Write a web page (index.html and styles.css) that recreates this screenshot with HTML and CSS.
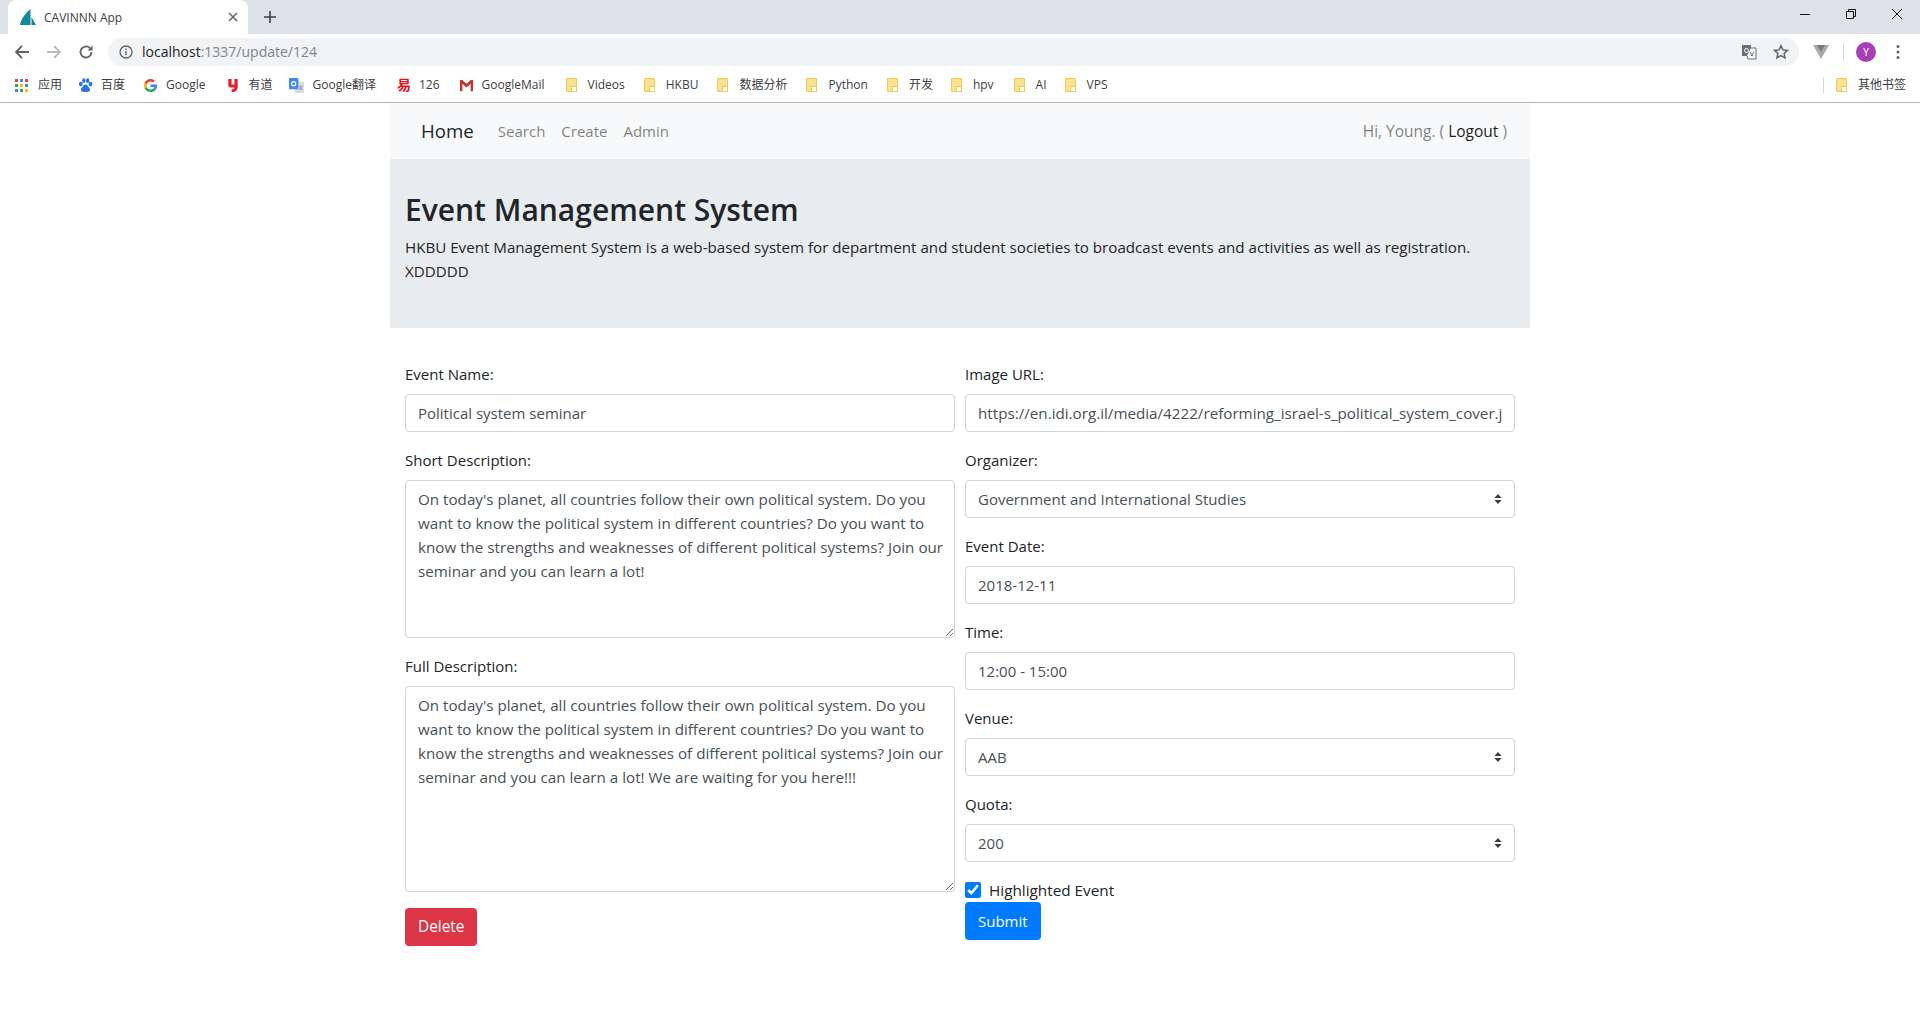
FILE: index.html
```html
<!DOCTYPE html>
<html lang="en">
<head>
    <meta charset="UTF-8">
    <title>CAVINNN App</title>
    <link rel="stylesheet" href="styles.css">
</head>
<body>

<!-- browser chrome -->
<div class="tabstrip">
    <div class="tab">
        <svg class="favicon" viewBox="0 0 16 16"><path d="M10.500 0C6 3.500 1 9.500 0 16h10.500z" fill="#14899b"/><path d="M11.500 8L16 16h-4.500z" fill="#14899b"/></svg>
        <span class="tab-title">CAVINNN App</span>
        <svg class="tab-close" viewBox="0 0 10 10"><path d="M1 1l8 8M9 1l-8 8" stroke="#5f6368" stroke-width="1.500"/></svg>
    </div>
    <svg class="tab-new" viewBox="0 0 12 12"><path d="M6 0v12M0 6h12" stroke="#3c4043" stroke-width="1.600"/></svg>
    <div class="window-btns">
        <svg viewBox="0 0 12 12"><path d="M1 6.500h10" stroke="#111" stroke-width="1"/></svg>
        <svg viewBox="0 0 12 12"><path d="M1.500 3.500h7v7h-7zM3.500 3.500v-2h7v7h-2" fill="none" stroke="#111" stroke-width="1"/></svg>
        <svg viewBox="0 0 12 12"><path d="M1 1l10 10M11 1L1 11" stroke="#111" stroke-width="1"/></svg>
    </div>
</div>

<div class="toolbar">
    <svg class="tool" viewBox="0 0 16 16"><path d="M15 8H2.500M8 2L2 8l6 6" fill="none" stroke="#5f6368" stroke-width="1.800"/></svg>
    <svg class="tool" viewBox="0 0 16 16"><path d="M1 8h12.500M8 2l6 6-6 6" fill="none" stroke="#b9bcc0" stroke-width="1.800"/></svg>
    <svg class="tool" viewBox="0 0 16 16"><path d="M13.500 8A5.500 5.500 0 1 1 11.800 4" fill="none" stroke="#5f6368" stroke-width="1.800"/><path d="M14.500 1.500v5h-5z" fill="#5f6368"/></svg>
    <div class="omnibox">
        <svg class="info" viewBox="0 0 14 14"><circle cx="7" cy="7" r="6" fill="none" stroke="#5f6368" stroke-width="1.300"/><path d="M7 6v4.200M7 3.500v1.400" stroke="#5f6368" stroke-width="1.400"/></svg>
        <span class="url">localhost<span class="url-rest">:1337/update/124</span></span>
        <svg class="translate" viewBox="0 0 16 16"><rect x="1" y="1" width="9" height="11" fill="#6d7073"/><path d="M10 4h5v11H7l-1-3" fill="#fff" stroke="#6d7073"/><circle cx="5.500" cy="6.500" r="2" fill="none" stroke="#fff"/><path d="M9 8l3 4M13 8l-3 4" stroke="#6d7073"/></svg>
        <svg class="star" viewBox="0 0 16 16"><path d="M8 1.800l1.900 4.100 4.500.5-3.300 3 .9 4.400L8 11.600l-4 2.200.9-4.400-3.300-3 4.500-.5z" fill="none" stroke="#5f6368" stroke-width="1.500"/></svg>
    </div>
    <svg class="vue-ext" viewBox="0 0 16 14"><path d="M0 0h16L8 14z" fill="#a6a8ab"/><path d="M4 0h8L8 7z" fill="#77797c"/></svg>
    <span class="tool-sep"></span>
    <span class="avatar">Y</span>
    <svg class="dots" viewBox="0 0 4 16"><circle cx="2" cy="2.500" r="1.500"/><circle cx="2" cy="8" r="1.500"/><circle cx="2" cy="13.500" r="1.500"/></svg>
</div>

<div class="bookmarks">
    <a class="bm bm-apps">
        <svg class="bm-icon" viewBox="0 0 13 13">
            <rect width="3" height="3" fill="#ea4335"/><rect x="5" width="3" height="3" fill="#4285f4"/><rect x="10" width="3" height="3" fill="#ea4335"/>
            <rect y="5" width="3" height="3" fill="#34a853"/><rect x="5" y="5" width="3" height="3" fill="#fbbc05"/><rect x="10" y="5" width="3" height="3" fill="#4285f4"/>
            <rect y="10" width="3" height="3" fill="#4285f4"/><rect x="5" y="10" width="3" height="3" fill="#34a853"/><rect x="10" y="10" width="3" height="3" fill="#fbbc05"/>
        </svg>应用</a>
    <a class="bm">
        <svg class="bm-icon" viewBox="0 0 16 16" fill="#2a76e8"><ellipse cx="3" cy="6.500" rx="2" ry="2.500"/><ellipse cx="6.200" cy="2.800" rx="1.800" ry="2.500"/><ellipse cx="10.300" cy="2.800" rx="1.800" ry="2.500"/><ellipse cx="13.300" cy="6.500" rx="2" ry="2.500"/><path d="M8 7c-2 0-2.500 2-4 3.500S3 15 6 15c1 0 1.300-.4 2-.4s1 .4 2 .4c3 0 3.500-3 2-4.500S10 7 8 7z"/></svg>百度</a>
    <a class="bm bm-google">
        <svg class="bm-icon" viewBox="0 0 16 16"><path d="M15 8.200c0-.5 0-1-.1-1.400H8v2.700h4c-.2.900-.7 1.700-1.500 2.200l2.300 1.800c1.400-1.300 2.200-3.100 2.200-5.300z" fill="#4285f4"/><path d="M8 15c1.900 0 3.500-.6 4.800-1.700l-2.300-1.800c-.7.400-1.500.7-2.500.7-1.900 0-3.500-1.300-4-3L1.600 11C2.800 13.400 5.200 15 8 15z" fill="#34a853"/><path d="M4 9.200c-.3-.8-.3-1.600 0-2.400L1.600 5c-.8 1.900-.8 4.100 0 6z" fill="#fbbc05"/><path d="M8 3.800c1 0 2 .4 2.700 1.100l2-2C11.500 1.700 9.800 1 8 1 5.200 1 2.800 2.600 1.600 5L4 6.800c.5-1.700 2.100-3 4-3z" fill="#ea4335"/></svg>Google</a>
    <a class="bm bm-youdao">
        <svg class="bm-icon" viewBox="0 0 12 16"><path d="M1 1h3.500v6h3V1H11v8.500c0 3-2 5.500-6.500 5.500v-3c2 0 3-.8 3-2H3C1.500 10 1 9 1 7.500z" fill="#e3202e"/></svg>有道</a>
    <a class="bm bm-translate">
        <svg class="bm-icon" viewBox="0 0 16 16"><rect x="6" y="4" width="10" height="12" fill="#d7dade"/><rect width="10" height="12" rx="1" fill="#4285f4"/><circle cx="5" cy="6" r="2.200" fill="none" stroke="#fff" stroke-width="1.200"/><path d="M11 8l3 5M14 8l-3 5" stroke="#8a8d91"/></svg>Google翻译</a>
    <a class="bm bm-wide"><span class="yi-icon">易</span>126</a>
    <a class="bm bm-gmail">
        <svg class="bm-icon" viewBox="0 0 16 14"><path d="M1 1h2.500L8 5l4.500-4H15v12h-2.600V5L8 9 3.600 5v8H1z" fill="#c5352b"/></svg>GoogleMail</a>
    <a class="bm bm-wide"><span class="folder"></span>Videos</a>
    <a class="bm bm-wide"><span class="folder"></span>HKBU</a>
    <a class="bm bm-wide"><span class="folder"></span>数据分析</a>
    <a class="bm bm-wide"><span class="folder"></span>Python</a>
    <a class="bm"><span class="folder"></span>开发</a>
    <a class="bm bm-hpv"><span class="folder"></span>hpv</a>
    <a class="bm"><span class="folder"></span>AI</a>
    <a class="bm"><span class="folder"></span>VPS</a>
    <span class="bm-sep"></span>
    <a class="bm bm-other"><span class="folder"></span>其他书签</a>
</div>

<!-- page -->
<div class="container">
    <nav class="navbar">
        <a class="brand">Home</a>
        <a class="nav-link">Search</a>
        <a class="nav-link">Create</a>
        <a class="nav-link">Admin</a>
        <span class="nav-user">Hi, Young. ( <a class="logout">Logout</a> )</span>
    </nav>

    <div class="jumbotron">
        <h1>Event Management System</h1>
        <p>HKBU Event Management System is a web-based system for department and student societies to broadcast events and activities as well as registration.<br>XDDDDD</p>
    </div>

    <form class="event-form">
        <div class="col">
            <div class="form-group">
                <label for="name">Event Name:</label>
                <input class="form-control" type="text" id="name" value="Political system seminar">
            </div>
            <div class="form-group">
                <label for="short">Short Description:</label>
                <textarea class="form-control short" id="short">On today's planet, all countries follow their own political system. Do you want to know the political system in different countries? Do you want to know the strengths and weaknesses of different political systems? Join our seminar and you can learn a lot!</textarea>
            </div>
            <div class="form-group">
                <label for="full">Full Description:</label>
                <textarea class="form-control full" id="full">On today's planet, all countries follow their own political system. Do you want to know the political system in different countries? Do you want to know the strengths and weaknesses of different political systems? Join our seminar and you can learn a lot! We are waiting for you here!!!</textarea>
            </div>
            <button class="btn btn-danger" type="button">Delete</button>
        </div>
        <div class="col">
            <div class="form-group">
                <label for="image">Image URL:</label>
                <input class="form-control url-input" type="text" id="image" value="https://en.idi.org.il/media/4222/reforming_israel-s_political_system_cover.jpg">
            </div>
            <div class="form-group">
                <label for="organizer">Organizer:</label>
                <select class="form-control" id="organizer"><option>Government and International Studies</option></select>
            </div>
            <div class="form-group">
                <label for="date">Event Date:</label>
                <input class="form-control" type="text" id="date" value="2018-12-11">
            </div>
            <div class="form-group">
                <label for="time">Time:</label>
                <input class="form-control" type="text" id="time" value="12:00 - 15:00">
            </div>
            <div class="form-group">
                <label for="venue">Venue:</label>
                <select class="form-control" id="venue"><option>AAB</option></select>
            </div>
            <div class="form-group">
                <label for="quota">Quota:</label>
                <select class="form-control" id="quota"><option>200</option></select>
            </div>
            <label class="check-row"><input type="checkbox" checked>Highlighted Event</label>
            <button class="btn btn-primary" type="submit">Submit</button>
        </div>
    </form>
</div>

</body>
</html>
```

FILE: styles.css
```css
* {
    box-sizing: border-box;
}

body {
    margin: 0;
    font-family: "Open Sans", "Noto Sans CJK SC", sans-serif;
    font-size: 15px;
    line-height: 24px;
    color: #212529;
    background: #fff;
}

/* browser chrome */
.tabstrip {
    display: flex;
    align-items: center;
    height: 34px;
    background: #dee1e6;
}

.tab {
    display: flex;
    align-items: center;
    width: 240px;
    height: 34px;
    margin-left: 8px;
    padding: 0 10px 0 12px;
    background: #fff;
    border-radius: 8px 8px 0 0;
}

.favicon {
    width: 16px;
    height: 16px;
    margin-right: 8px;
}

.tab-title {
    flex: 1;
    padding-top: 1px;
    font-size: 12px;
    color: #3c4043;
}

.tab-close {
    width: 10px;
    height: 10px;
}

.tab-new {
    width: 12px;
    height: 12px;
    margin-left: 16px;
}

.window-btns {
    display: flex;
    align-self: flex-start;
    gap: 34px;
    margin-top: 8px;
    margin-left: auto;
    margin-right: 17px;
}

.window-btns svg {
    width: 12px;
    height: 12px;
}

.toolbar {
    display: flex;
    align-items: center;
    height: 34px;
    padding: 2px 0 0 14px;
    background: #fff;
}

.tool {
    width: 16px;
    height: 16px;
    margin-right: 16px;
}

.omnibox {
    display: flex;
    align-items: center;
    width: 1691px;
    height: 28px;
    margin-left: -2px;
    padding: 0 10px 0 11px;
    background: #f1f3f4;
    border-radius: 14px;
}

.info {
    width: 14px;
    height: 14px;
    margin-right: 9px;
}

.url {
    flex: 1;
    font-size: 14px;
    color: #202124;
}

.url-rest {
    color: #80868b;
}

.translate {
    width: 16px;
    height: 16px;
    margin-right: 16px;
}

.star {
    width: 16px;
    height: 16px;
}

.vue-ext {
    width: 16px;
    height: 14px;
    margin-left: 14px;
}

.tool-sep {
    width: 1px;
    height: 16px;
    margin-left: 14px;
    background: #d3d5d8;
}

.avatar {
    width: 20px;
    height: 20px;
    margin-left: 12px;
    border-radius: 50%;
    background: #a83fb8;
    color: #fff;
    font-size: 10px;
    line-height: 20px;
    text-align: center;
}

.dots {
    width: 4px;
    height: 16px;
    margin-left: 20px;
    fill: #5f6368;
}

.bookmarks {
    display: flex;
    align-items: center;
    height: 35px;
    padding-left: 15px;
    border-bottom: 1px solid #b5b6b8;
    background: #fff;
    font-size: 12px;
    color: #3c4043;
}

.bm {
    display: flex;
    align-items: center;
    margin-right: 18px;
    white-space: nowrap;
}

.bm-apps,
.bm-youdao {
    margin-right: 16px;
}

.bm-google {
    margin-right: 22px;
}

.bm-hpv {
    margin-right: 20px;
}

.bm-wide {
    margin-right: 19px;
}

.bm-translate,
.bm-gmail {
    margin-right: 21px;
}

.bm-icon {
    width: 15px;
    height: 15px;
    margin-right: 8px;
}

.bm-apps .bm-icon {
    width: 13px;
    height: 13px;
    margin-right: 10px;
}

.bm-youdao .bm-icon {
    width: 12px;
    margin-right: 9px;
}

.bm-translate .bm-icon {
    margin-right: 9px;
}

.yi-icon {
    width: 14px;
    margin-right: 8px;
    color: #e3101e;
    font-size: 14px;
    font-weight: 700;
    line-height: 16px;
}

.folder {
    position: relative;
    width: 11px;
    height: 14px;
    margin-right: 11px;
    background: #fde293;
    border: 1px solid #f0c94f;
    border-radius: 1px;
}

.folder::after {
    content: "";
    position: absolute;
    right: -1px;
    bottom: -1px;
    width: 4px;
    height: 4px;
    background: #fff;
    border: 1px solid #f0c94f;
}

.bm-sep {
    width: 1px;
    height: 16px;
    margin-left: auto;
    margin-right: 12px;
    background: #d3d5d8;
}

.bm-other {
    margin-right: 14px;
}

/* page */
.container {
    width: 1140px;
    margin: 0 auto;
}

.navbar {
    display: flex;
    align-items: center;
    height: 56px;
    padding: 0 23px 0 31px;
    background: #f8f9fa;
}

.brand {
    margin-right: 24px;
    font-size: 18.700px;
}

.nav-link {
    margin-right: 16px;
    color: rgba(0, 0, 0, .5);
}

.nav-user {
    margin-left: auto;
    font-size: 15.500px;
    color: rgba(0, 0, 0, .5);
}

.logout {
    color: rgba(0, 0, 0, .9);
}

.jumbotron {
    height: 169px;
    padding: 30px 15px 0;
    background: #e9ecef;
}

h1 {
    margin: 0 0 4px;
    font-size: 30px;
    font-weight: 600;
    line-height: 42px;
}

p {
    margin: 0;
    font-size: 15.150px;
}

.event-form {
    display: flex;
    gap: 10px;
    padding: 34px 15px 0;
}

.col {
    flex: 1;
    min-width: 0;
}

.form-group {
    margin-bottom: 16px;
}

label {
    display: block;
    margin-bottom: 8px;
}

.form-control {
    display: block;
    width: 100%;
    height: 38px;
    padding: 6px 12px;
    font: inherit;
    color: #495057;
    background: #fff;
    border: 1px solid #ced4da;
    border-radius: 4px;
}

textarea.form-control {
    padding-right: 8px;
    resize: vertical;
    font-size: 15.200px;
}

.url-input {
    font-size: 15.200px;
}

.short {
    height: 158px;
}

textarea.full {
    height: 206px;
}

select.form-control {
    appearance: none;
    padding-right: 28px;
    background: #fff url("data:image/svg+xml,%3Csvg xmlns='http://www.w3.org/2000/svg' width='8' height='10'%3E%3Cpath d='M4 0L7.500 4H.5zM4 10L.5 6h7z' fill='%23343a40'/%3E%3C/svg%3E") no-repeat right 12px center;
}

.check-row {
    display: flex;
    align-items: center;
    height: 24px;
    margin: 0;
    font-size: 15.300px;
}

.check-row input {
    width: 16px;
    height: 16px;
    margin: 0 8px 0 0;
    accent-color: #007bff;
}

.btn {
    display: block;
    height: 38px;
    padding: 0 12px;
    font: inherit;
    color: #fff;
    border: 1px solid transparent;
    border-radius: 4px;
}

.btn-danger {
    font-size: 15.400px;
    background: #dc3545;
}

.btn-primary {
    background: #007bff;
}
```
